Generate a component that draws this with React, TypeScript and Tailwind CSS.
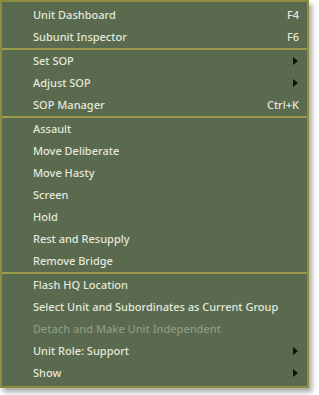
type Item = {
  label: string;
  shortcut?: string;
  submenu?: boolean;
  disabled?: boolean;
};

const groups: Item[][] = [
  [
    { label: 'Unit Dashboard', shortcut: 'F4' },
    { label: 'Subunit Inspector', shortcut: 'F6' }
  ],
  [
    { label: 'Set SOP', submenu: true },
    { label: 'Adjust SOP', submenu: true },
    { label: 'SOP Manager', shortcut: 'Ctrl+K' }
  ],
  [
    { label: 'Assault' },
    { label: 'Move Deliberate' },
    { label: 'Move Hasty' },
    { label: 'Screen' },
    { label: 'Hold' },
    { label: 'Rest and Resupply' },
    { label: 'Remove Bridge' }
  ],
  [
    { label: 'Flash HQ Location' },
    { label: 'Select Unit and Subordinates as Current Group' },
    { label: 'Detach and Make Unit Independent', disabled: true },
    { label: 'Unit Role: Support', submenu: true },
    { label: 'Show', submenu: true }
  ]
];

const MenuRow = ({ item }: { item: Item }) => (
  <div
    className={`flex h-[22px] items-center pl-[31px] pr-[8px] ${
      item.disabled ? 'text-[#8c9a80]' : 'text-[#e4e7dc]'
    }`}
  >
    <span className="flex-1 whitespace-nowrap">{item.label}</span>
    {item.shortcut && <span className="whitespace-nowrap">{item.shortcut}</span>}
    {item.submenu && (
      <svg width="5" height="8" viewBox="0 0 5 8" className="mr-[1px]">
        <path d="M0 0 L5 4 L0 8 Z" fill="#111" />
      </svg>
    )}
  </div>
);

export default function App() {
  return (
    <div className="h-[395px] w-[319px] bg-white">
      <div
        className="w-[309px] border-2 border-[#8d8b3f] bg-[#5a6a4e] py-[2px] text-[11px] font-medium shadow-[3px_4px_5px_rgba(0,0,0,0.35)]"
        style={{ fontFamily: '"Noto Sans", sans-serif' }}
      >
        {groups.map((group, gi) => (
          <div key={gi}>
            {gi > 0 && <div className="h-[2px] bg-[#9d9a4c]" />}
            {group.map((item) => (
              <MenuRow key={item.label} item={item} />
            ))}
          </div>
        ))}
      </div>
    </div>
  );
}
